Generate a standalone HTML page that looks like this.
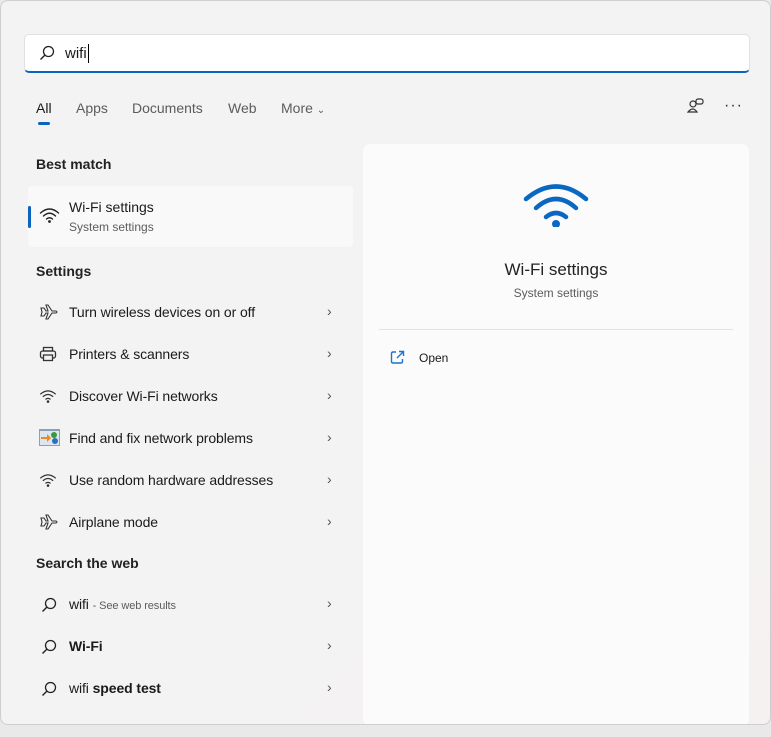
<!DOCTYPE html>
<html><head><style>
*{margin:0;padding:0;box-sizing:border-box}
body{width:771px;height:737px;background:#e9e9e9;font-family:"Liberation Sans",sans-serif;position:relative;overflow:hidden;color:#1a1a1a}
.win{position:absolute;left:0;top:0;width:771px;height:725px;background:linear-gradient(135deg,#f3f3f3 0%,#f3f3f3 60%,#f6f1f1 100%);border:1px solid #cfcfcf;border-radius:8px;overflow:hidden}
.search{position:absolute;left:23px;top:33px;width:726px;height:39px;background:#fff;border:1px solid #e0e0e0;border-bottom:2px solid #0a63bf;border-radius:5px}
.search span{position:absolute;left:40px;top:10px;font-size:15px}
.cursor{position:absolute;left:63px;top:9px;width:1px;height:19px;background:#000}
.tab{position:absolute;top:99px;font-size:14px;color:#5c5c5c}
.abs{position:absolute}
.h{position:absolute;left:35px;font-size:14px;font-weight:bold;color:#222}
.row{position:absolute;left:68px;font-size:14px;color:#1a1a1a;letter-spacing:-0.1px}
.chev{position:absolute;left:326px;font-size:14px;color:#555}
.ic{position:absolute;left:38px}
.panel{position:absolute;left:362px;top:143px;width:386px;height:582px;background:#fbfbfb;border-radius:7px}
</style></head><body>
<div class="win">
<div class="search">
<svg class="abs" style="left:14px;top:10px" width="16" height="16" viewBox="0 0 16 16"><circle cx="9.5" cy="6.5" r="5" fill="none" stroke="#222" stroke-width="1.3"/><path d="M6 10 L1.5 14.5" stroke="#222" stroke-width="1.4"/></svg>
<span>wifi</span><div class="cursor"></div></div>
<div class="tab" style="left:35px;color:#1a1a1a">All</div>
<div class="abs" style="left:37px;top:121px;width:12px;height:3px;background:#0a63bf;border-radius:2px"></div>
<div class="tab" style="left:75px">Apps</div>
<div class="tab" style="left:131px">Documents</div>
<div class="tab" style="left:227px">Web</div>
<div class="tab" style="left:280px">More <span style="font-size:10px">&#8964;</span></div>
<svg class="abs" style="left:686px;top:97px" width="18" height="16" viewBox="0 0 18 16"><circle cx="6" cy="6" r="3" fill="none" stroke="#333" stroke-width="1.2"/><path d="M1 14 Q6 8 10 14Z" fill="none" stroke="#333" stroke-width="1.2"/><rect x="9" y="1" width="7" height="5" rx="2" fill="none" stroke="#333" stroke-width="1.2"/></svg>
<div class="abs" style="left:723px;top:96px;font-size:16px;color:#333;letter-spacing:1px">···</div>

<div class="h" style="top:155px">Best match</div>
<div class="abs" style="left:27px;top:185px;width:325px;height:61px;background:#f9f9f9;border-radius:4px"></div>
<div class="abs" style="left:27px;top:205px;width:3px;height:22px;background:#0a63bf;border-radius:2px"></div>
<svg class="abs" style="left:38px;top:206px" width="21" height="16" viewBox="0 0 21 16"><g fill="none" stroke="#222" stroke-width="1.4" stroke-linecap="round"><path d="M1.5 6 Q10.5 -2 19.5 6"/><path d="M4.5 9 Q10.5 3.5 16.5 9"/><path d="M7.5 12 Q10.5 9.5 13.5 12"/></g><circle cx="10.5" cy="14.5" r="1.4" fill="#222"/></svg>
<div class="abs" style="left:68px;top:198px;font-size:14px">Wi-Fi settings</div>
<div class="abs" style="left:68px;top:219px;font-size:12px;color:#5c5c5c">System settings</div>

<div class="h" style="top:262px">Settings</div>
<div class="row" style="top:303px">Turn wireless devices on or off</div>
<div class="row" style="top:345px">Printers &amp; scanners</div>
<div class="row" style="top:387px">Discover Wi-Fi networks</div>
<div class="row" style="top:429px">Find and fix network problems</div>
<div class="row" style="top:471px">Use random hardware addresses</div>
<div class="row" style="top:513px">Airplane mode</div>
<div class="chev" style="top:302px">&#x203A;</div><div class="chev" style="top:344px">&#x203A;</div><div class="chev" style="top:386px">&#x203A;</div><div class="chev" style="top:428px">&#x203A;</div><div class="chev" style="top:470px">&#x203A;</div><div class="chev" style="top:512px">&#x203A;</div>
<svg class="ic" style="top:303px" width="20" height="16" viewBox="0 0 20 16"><path d="M2 4 L5 4 L7 7 L9 7 L7 1 L9 1 L13 7 L17 7 Q19 8 17 9 L13 9 L9 15 L7 15 L9 9 L7 9 L5 12 L2 12 L3 8Z" fill="none" stroke="#333" stroke-width="1.1"/></svg>
<svg class="ic" style="top:345px" width="18" height="16" viewBox="0 0 18 16"><rect x="1.5" y="5" width="15" height="7" rx="2" fill="none" stroke="#333" stroke-width="1.3"/><rect x="4.5" y="1.5" width="9" height="3.5" fill="none" stroke="#333" stroke-width="1.3"/><rect x="4.5" y="9" width="9" height="5.5" fill="#f3f3f3" stroke="#333" stroke-width="1.3"/></svg>
<svg class="ic" style="top:388px" width="18" height="14" viewBox="0 0 21 16"><g fill="none" stroke="#333" stroke-width="1.4"><path d="M1.5 6 Q10.5 -2 19.5 6"/><path d="M4.5 9 Q10.5 3.5 16.5 9"/><path d="M7.5 12 Q10.5 9.5 13.5 12"/></g><circle cx="10.5" cy="14.5" r="1.5" fill="#333"/></svg>
<svg class="ic" style="top:428px" width="21" height="17" viewBox="0 0 21 17"><rect x="0" y="0" width="21" height="17" fill="#8aa0b8"/><rect x="1" y="2" width="19" height="14" fill="#dde6ee"/><path d="M2 8 H8 V5 L12 9 L8 13 V10 H2Z" fill="#f08a1c"/><circle cx="15" cy="6" r="3" fill="#3a9a3a"/><circle cx="16" cy="12" r="3" fill="#2a6fc0"/></svg>
<svg class="ic" style="top:472px" width="18" height="14" viewBox="0 0 21 16"><g fill="none" stroke="#333" stroke-width="1.4"><path d="M1.5 6 Q10.5 -2 19.5 6"/><path d="M4.5 9 Q10.5 3.5 16.5 9"/><path d="M7.5 12 Q10.5 9.5 13.5 12"/></g><circle cx="10.5" cy="14.5" r="1.5" fill="#333"/></svg>
<svg class="ic" style="top:513px" width="20" height="16" viewBox="0 0 20 16"><path d="M2 4 L5 4 L7 7 L9 7 L7 1 L9 1 L13 7 L17 7 Q19 8 17 9 L13 9 L9 15 L7 15 L9 9 L7 9 L5 12 L2 12 L3 8Z" fill="none" stroke="#333" stroke-width="1.1"/></svg>

<div class="h" style="top:554px">Search the web</div>
<svg class="ic" style="top:596px;left:40px" width="16" height="16" viewBox="0 0 16 16"><circle cx="9.5" cy="6.5" r="5" fill="none" stroke="#222" stroke-width="1.3"/><path d="M6 10 L1.5 14.5" stroke="#222" stroke-width="1.4"/></svg>
<svg class="ic" style="top:638px;left:40px" width="16" height="16" viewBox="0 0 16 16"><circle cx="9.5" cy="6.5" r="5" fill="none" stroke="#222" stroke-width="1.3"/><path d="M6 10 L1.5 14.5" stroke="#222" stroke-width="1.4"/></svg>
<svg class="ic" style="top:680px;left:40px" width="16" height="16" viewBox="0 0 16 16"><circle cx="9.5" cy="6.5" r="5" fill="none" stroke="#222" stroke-width="1.3"/><path d="M6 10 L1.5 14.5" stroke="#222" stroke-width="1.4"/></svg>
<div class="row" style="top:595px">wifi <span style="font-size:11px;color:#5c5c5c">- See web results</span></div>
<div class="row" style="top:637px;font-weight:bold">Wi-Fi</div>
<div class="row" style="top:679px">wifi <b>speed test</b></div>
<div class="chev" style="top:594px">&#x203A;</div><div class="chev" style="top:636px">&#x203A;</div><div class="chev" style="top:678px">&#x203A;</div>

<div class="panel">
<svg class="abs" style="left:160px;top:38px" width="66" height="45" viewBox="0 0 66 45"><g fill="none" stroke="#0a67c2" stroke-width="4.5" stroke-linecap="round"><path d="M3 17 Q33 -8 63 17"/><path d="M13 26 Q33 8 53 26"/><path d="M23 35 Q33 27 43 35"/></g><circle cx="33" cy="42" r="4" fill="#0a67c2"/></svg>
<div class="abs" style="left:0;width:386px;top:116px;text-align:center;font-size:17px;color:#222">Wi-Fi settings</div>
<div class="abs" style="left:0;width:386px;top:142px;text-align:center;font-size:12px;color:#5c5c5c">System settings</div>
<div class="abs" style="left:16px;top:185px;width:354px;height:1px;background:#e3e3e3"></div>
<svg class="abs" style="left:27px;top:206px" width="15" height="15" viewBox="0 0 15 15"><g fill="none" stroke="#1a73d0" stroke-width="1.4"><path d="M6 2 H3 Q1.5 2 1.5 3.5 V11.5 Q1.5 13 3 13 H11 Q12.5 13 12.5 11.5 V9"/><path d="M9 1.5 H13.5 V6 M13.5 1.5 L7 8"/></g></svg>
<div class="abs" style="left:56px;top:207px;font-size:12px">Open</div>
</div>
</div>
</body></html>
